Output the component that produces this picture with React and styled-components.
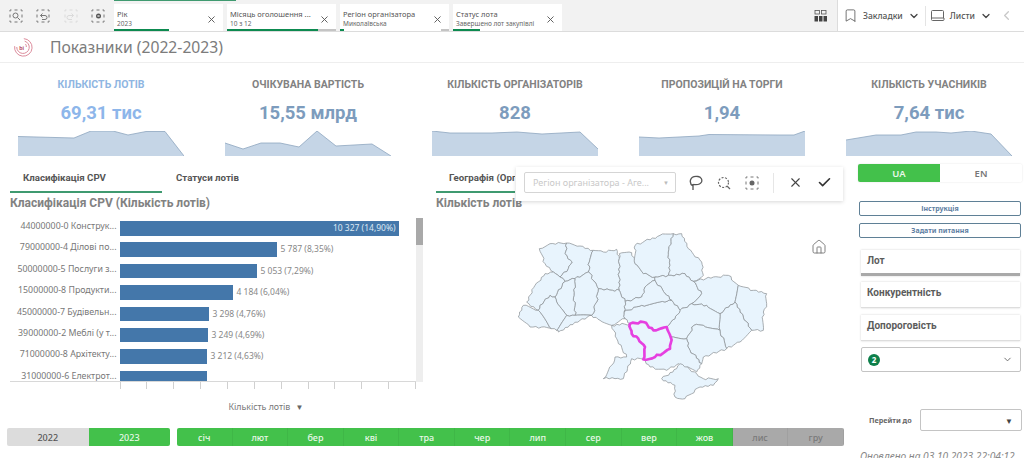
import React from 'react';
import styled, { createGlobalStyle } from 'styled-components';
import { X, ChevronDown, ChevronLeft, Bookmark, Check, House } from 'lucide-react';

const GlobalStyle = createGlobalStyle`
    html, body {
        margin: 0;
        padding: 0;
        background: #fff;
    }
    * {
        box-sizing: border-box;
    }
`;

const chips = [
    { title: 'Рік', value: '2023', green: 55, grey: 0 },
    { title: 'Місяць оголошення ...', value: '10 з 12', green: 91, grey: 18 },
    { title: 'Регіон організатора', value: 'Миколаївська', green: 4, grey: 8 },
    { title: 'Статус лота', value: 'Завершено лот закупівлі', green: 27, grey: 0 },
];

const kpis = [
    { label: 'КІЛЬКІСТЬ ЛОТІВ', value: '69,31 тис', active: true, points: [[0, 5.5], [56, 7], [73, 0], [95, 0], [110, 4], [128, 0.5], [147, 0.5], [166, 25]] },
    { label: 'ОЧІКУВАНА ВАРТІСТЬ', value: '15,55 млрд', points: [[0, 12], [18, 18], [36, 12], [55, 12], [74, 16], [92, 0], [111, 15], [147, 13], [166, 25]] },
    { label: 'КІЛЬКІСТЬ ОРГАНІЗАТОРІВ', value: '828', points: [[0, 0], [18, 2], [60, 2], [85, 1], [110, 3], [148, 1], [166, 18]] },
    { label: 'ПРОПОЗИЦІЙ НА ТОРГИ', value: '1,94', points: [[0, 6], [20, 7], [60, 5], [70, 3.5], [140, 4], [155, 4], [166, 0]] },
    { label: 'КІЛЬКІСТЬ УЧАСНИКІВ', value: '7,64 тис', points: [[0, 9], [30, 4], [55, 4], [70, 1], [90, 1], [105, 2], [125, 0], [145, 3], [166, 25]] },
];

const bars = [
    { label: '44000000-0 Конструк...', width: 279, value: '10 327 (14,90%)', inside: true },
    { label: '79000000-4 Ділові по...', width: 157, value: '5 787 (8,35%)' },
    { label: '50000000-5 Послуги з...', width: 137, value: '5 053 (7,29%)' },
    { label: '15000000-8 Продукти...', width: 113, value: '4 184 (6,04%)' },
    { label: '45000000-7 Будівельн...', width: 89, value: '3 298 (4,76%)' },
    { label: '39000000-2 Меблі (у т...', width: 88, value: '3 249 (4,69%)' },
    { label: '71000000-8 Архітекту...', width: 87, value: '3 212 (4,63%)' },
    { label: '31000000-6 Електрот...', width: 87 },
];

const months = ['січ', 'лют', 'бер', 'кві', 'тра', 'чер', 'лип', 'сер', 'вер', 'жов', 'лис', 'гру'];

const regions = [
    [[118, 80], [150, 65], [200, 63], [195, 95], [217, 120], [205, 140], [180, 165], [160, 150], [135, 125]],
    [[200, 63], [240, 72], [280, 85], [268, 120], [265, 150], [225, 170], [195, 178], [180, 165], [205, 140], [217, 120], [195, 95]],
    [[280, 85], [310, 90], [350, 82], [358, 110], [358, 205], [338, 205], [295, 200], [285, 180], [265, 150], [268, 120]],
    [[358, 110], [358, 95], [395, 92], [405, 125], [430, 155], [465, 165], [465, 175], [435, 195], [425, 225], [375, 238], [358, 205]],
    [[405, 70], [480, 40], [520, 35], [505, 90], [510, 130], [505, 160], [465, 165], [430, 155], [405, 125]],
    [[520, 35], [545, 35], [565, 80], [605, 120], [610, 160], [580, 178], [555, 155], [505, 160], [510, 130], [505, 90]],
    [[465, 165], [505, 160], [555, 155], [580, 178], [605, 215], [575, 245], [540, 265], [515, 235], [495, 215], [465, 175]],
    [[580, 178], [640, 165], [685, 160], [715, 190], [705, 240], [660, 275], [620, 250], [575, 245], [605, 215]],
    [[715, 190], [760, 205], [800, 215], [800, 245], [790, 270], [790, 325], [755, 325], [730, 285], [705, 240]],
    [[705, 240], [730, 285], [755, 325], [720, 360], [680, 380], [660, 325], [660, 275]],
    [[540, 265], [575, 245], [620, 250], [660, 275], [660, 325], [610, 310], [582, 310], [560, 350], [512, 345], [500, 315], [525, 290]],
    [[582, 310], [610, 310], [660, 325], [680, 380], [610, 405], [605, 425], [570, 385], [560, 350]],
    [[512, 345], [560, 350], [570, 385], [605, 425], [590, 450], [535, 425], [500, 445], [450, 435], [430, 412], [465, 405], [510, 380]],
    [[335, 310], [390, 305], [395, 335], [415, 350], [435, 375], [430, 412], [395, 410], [370, 470], [345, 470], [310, 470], [335, 430], [345, 405], [380, 405], [350, 350]],
    [[372, 270], [425, 250], [495, 240], [515, 235], [540, 265], [525, 290], [500, 315], [460, 325], [430, 300], [390, 305], [375, 290]],
    [[375, 238], [425, 225], [435, 195], [465, 175], [495, 215], [515, 235], [495, 240], [425, 250], [372, 270]],
    [[295, 200], [338, 205], [358, 205], [375, 238], [372, 270], [375, 290], [335, 310], [300, 295], [275, 280], [290, 240]],
    [[225, 170], [265, 150], [285, 180], [295, 200], [290, 240], [275, 280], [225, 280], [222, 220]],
    [[165, 225], [195, 178], [225, 170], [222, 220], [225, 280], [200, 280], [170, 240]],
    [[80, 240], [105, 190], [135, 155], [160, 150], [180, 165], [195, 178], [165, 225], [150, 220], [120, 250], [115, 265]],
    [[70, 250], [115, 265], [155, 320], [125, 315], [90, 315], [55, 285]],
    [[115, 265], [120, 250], [150, 220], [165, 225], [170, 240], [200, 280], [170, 325], [155, 320]],
    [[200, 280], [225, 280], [275, 280], [240, 295], [175, 330], [170, 325]],
    [[485, 470], [530, 440], [540, 425], [590, 455], [610, 470], [655, 470], [640, 490], [600, 495], [555, 530], [525, 525], [525, 490]],
];

const mykolaiv = [[390, 305], [430, 300], [460, 325], [500, 315], [512, 345], [510, 380], [465, 405], [430, 412], [435, 375], [415, 350], [395, 335]];

// borders wobble the same way from both sides, so neighbours stay glued
function jagged(points) {
    let d = '';
    points.forEach((p, i) => {
        const q = points[(i + 1) % points.length];
        const flip = p[0] > q[0] || (p[0] === q[0] && p[1] > q[1]);
        const [a, b] = flip ? [q, p] : [p, q];
        const len = Math.hypot(b[0] - a[0], b[1] - a[1]);
        const n = Math.max(2, Math.round(len / 8));
        const steps = [];
        for (let k = 1; k < n; k++) {
            const t = k / n;
            const seed = Math.sin(a[0] * 12.9 + b[1] * 78.2 + k * 37.7) * 43758;
            const off = (seed - Math.floor(seed) - 0.5) * 7;
            steps.push([
                a[0] + (b[0] - a[0]) * t - ((b[1] - a[1]) / len) * off,
                a[1] + (b[1] - a[1]) * t + ((b[0] - a[0]) / len) * off,
            ]);
        }
        if (flip) steps.reverse();
        d += `${i === 0 ? 'M' : 'L'}${p[0]} ${p[1]} `;
        steps.forEach(s => {
            d += `L${s[0].toFixed(1)} ${s[1].toFixed(1)} `;
        });
    });
    return `${d}Z`;
}

const Sparkline = ({ points }) => {
    const line = points.map(p => p.join(',')).join(' ');
    return (
        <Spark viewBox="0 0 166 25" preserveAspectRatio="none">
            <polygon points={`0,25 ${line} 166,25`} fill="#c5d5e6" />
            <polyline points={line} fill="none" stroke="#8ea6bf" strokeWidth="0.8" />
        </Spark>
    );
};

const DashedBox = ({ children, color = '#777' }) => (
    <svg width="14" height="14" viewBox="0 0 14 14" fill="none" stroke={color} strokeWidth="1">
        <rect x="1" y="1" width="12" height="12" strokeDasharray="3 3" strokeDashoffset="1.500" />
        {children}
    </svg>
);

const Logo = () => (
    <svg width="20" height="20" viewBox="0 0 24 24" fill="none" stroke="#dc8c9c">
        <path d="M13 2a10.500 10.500 0 1 1-11 9" strokeWidth="1.200" />
        <path d="M14 5a7.500 7.500 0 1 1-9.500 7" strokeWidth="1.200" />
        <path d="M15 8.500a5 5 0 0 1 1 3.500" strokeWidth="1.200" />
        <text x="7.500" y="15" fontSize="7" fontWeight="700" fontFamily="Roboto, sans-serif" fill="#b9566e" stroke="none">bi</text>
    </svg>
);

const App = () => (
    <Root>
        <GlobalStyle />
        <Toolbar>
            <TopEdge />
            <ToolIcons>
                <DashedBox><circle cx="6.500" cy="6.500" r="2.500" /><path d="M8.500 8.500l2.500 2.500" /></DashedBox>
                <DashedBox><path d="M4.500 6.500h4.500a2 2 0 0 1 0 4H6M4.500 6.500l2-2M4.500 6.500l2 2" /></DashedBox>
                <DashedBox color="#dadada"><path d="M9.500 6.500H5a2 2 0 0 0 0 4h3M9.500 6.500l-2-2M9.500 6.500l-2 2" /></DashedBox>
                <DashedBox><circle cx="7.500" cy="7" r="2.500" fill="#555" stroke="none" /><path d="M6.500 6l2 2M8.500 6l-2 2" stroke="#fff" strokeWidth="0.700" /></DashedBox>
            </ToolIcons>
            <Chips>
                {chips.map(chip => (
                    <Chip key={chip.title}>
                        <ChipText>
                            <ChipTitle>{chip.title}</ChipTitle>
                            <ChipValue>{chip.value}</ChipValue>
                        </ChipText>
                        <X size={11} color="#555" strokeWidth={2} />
                        <ChipProgress>
                            <ProgressGreen style={{ width: chip.green }} />
                            {chip.grey > 0 && <ProgressGrey style={{ width: chip.grey }} />}
                        </ChipProgress>
                    </Chip>
                ))}
            </Chips>
            <GridIcon viewBox="0 0 14 12">
                <rect x="1" y="0.500" width="4.500" height="3.500" fill="none" stroke="#555" strokeWidth="0.800" />
                <rect x="7.500" y="0.500" width="4.500" height="3.500" fill="none" stroke="#555" strokeWidth="0.800" />
                <rect x="0.500" y="6" width="3.500" height="5.500" fill="#444" />
                <rect x="5" y="6" width="3.500" height="5.500" fill="#444" />
                <rect x="9.500" y="6" width="3.500" height="5.500" fill="#444" />
            </GridIcon>
            <NavArea>
                <NavItem>
                    <Bookmark size={15} color="#555" strokeWidth={1.3} />
                    <NavLabel>Закладки</NavLabel>
                    <ChevronDown size={12} color="#444" strokeWidth={2.5} />
                </NavItem>
                <NavDivider />
                <NavItem>
                    <svg width="14" height="12" viewBox="0 0 14 12" fill="none" stroke="#666" strokeWidth="1">
                        <path d="M3 10.500H1.500a1 1 0 0 1-1-1v-8a1 1 0 0 1 1-1h10a1 1 0 0 1 1 1V8M.5 8h12.500v1.500a1 1 0 0 1-1 1H3" />
                    </svg>
                    <NavLabel>Листи</NavLabel>
                    <ChevronDown size={12} color="#444" strokeWidth={2.5} />
                </NavItem>
                <BackIcon><ChevronLeft size={15} color="#c8c8c8" strokeWidth={2} /></BackIcon>
            </NavArea>
        </Toolbar>
        <TitleBar>
            <Logo />
            <PageTitle>Показники (2022-2023)</PageTitle>
        </TitleBar>
        <KpiRow>
            {kpis.map(kpi => (
                <Kpi key={kpi.label}>
                    <KpiLabel $active={kpi.active}>{kpi.label}</KpiLabel>
                    <KpiValue $active={kpi.active}>{kpi.value}</KpiValue>
                    <Sparkline points={kpi.points} />
                </Kpi>
            ))}
        </KpiRow>
        <Body>
            <Content>
                <Panels>
                    <LeftPanel>
                        <Tabs>
                            <Tab $width={152} $selected>Класифікація CPV</Tab>
                            <Tab>Статуси лотів</Tab>
                        </Tabs>
                        <PanelTitle>Класифікація CPV (Кількість лотів)</PanelTitle>
                        <ChartWrap>
                            <Plot>
                                <BarList>
                                    {bars.map(bar => (
                                        <BarRow key={bar.label}>
                                            <BarLabel>{bar.label}</BarLabel>
                                            <Bar style={{ width: bar.width }}>
                                                {bar.inside && <BarInside>{bar.value}</BarInside>}
                                            </Bar>
                                            {!bar.inside && <BarValue>{bar.value}</BarValue>}
                                        </BarRow>
                                    ))}
                                </BarList>
                                <Ticks>
                                    {Array.from({ length: 12 }, (_, i) => <Tick key={i} />)}
                                </Ticks>
                            </Plot>
                            <ScrollTrack><ScrollThumb /></ScrollTrack>
                        </ChartWrap>
                        <AxisLabel>Кількість лотів <AxisArrow>▼</AxisArrow></AxisLabel>
                    </LeftPanel>
                    <MiddlePanel>
                        <Tabs>
                            <Tab $width={79} $selected>Географія (Орг</Tab>
                        </Tabs>
                        <PanelTitle>Кількість лотів</PanelTitle>
                        <MapSvg viewBox="0 0 1020 555">
                            {regions.map((r, i) => (
                                <path key={i} d={jagged(r)} fill="#e8f4fd" stroke="#8c9196" strokeWidth="2.200" strokeLinejoin="round" />
                            ))}
                            <path d={jagged(mykolaiv)} fill="#e8f4fd" stroke="#e63fe0" strokeWidth="8" strokeLinejoin="round" />
                        </MapSvg>
                        <HomeButton><House size={16} color="#777" strokeWidth={1.4} /></HomeButton>
                        <SelectionBar>
                            <SelectionField>
                                <SelectionText>Регіон організатора - Аге...</SelectionText>
                                <SelectionCaret>▼</SelectionCaret>
                            </SelectionField>
                            <SelectionTools>
                                <svg width="14" height="16" viewBox="0 0 14 16" fill="none" stroke="#555" strokeWidth="1.300">
                                    <path d="M4 11C1.500 9.500 1 7 1.500 5 2.500 2 6 1 9 1.500c3 .5 4.500 3 3.500 5.500C11.500 9 8 10 4.500 9.500M4 9v6" />
                                </svg>
                                <svg width="14" height="14" viewBox="0 0 14 14" fill="none" stroke="#666" strokeWidth="1.200" strokeDasharray="2 1.500">
                                    <circle cx="6.500" cy="6.500" r="5" />
                                    <path d="M10 10l3 3" strokeDasharray="none" />
                                </svg>
                                <DashedBox><circle cx="7" cy="7" r="2.500" fill="#666" stroke="none" /></DashedBox>
                                <SelectionDivider />
                                <X size={15} color="#444" strokeWidth={1.8} />
                                <Check size={15} color="#333" strokeWidth={2.6} />
                            </SelectionTools>
                        </SelectionBar>
                    </MiddlePanel>
                </Panels>
                <Footer>
                    <YearGroup>
                        <Segment $tone="light">2022</Segment>
                        <Segment $tone="green">2023</Segment>
                    </YearGroup>
                    <MonthGroup>
                        {months.map((m, i) => (
                            <Segment key={m} $tone={i < 10 ? 'green' : 'grey'} $line>{m}</Segment>
                        ))}
                    </MonthGroup>
                </Footer>
            </Content>
            <Side>
                <LangSwitch>
                    <Lang $on>UA</Lang>
                    <Lang>EN</Lang>
                </LangSwitch>
                <SideButton $top={19}>Інструкція</SideButton>
                <SideButton $top={7}>Задати питання</SideButton>
                <Accordion $top={12} $thick>Лот</Accordion>
                <Accordion $top={6}>Конкурентність</Accordion>
                <Accordion $top={7}>Допороговість</Accordion>
                <Dropdown>
                    <Badge>2</Badge>
                    <ChevronDown size={11} color="#666" strokeWidth={2} />
                </Dropdown>
                <GotoRow>
                    <GotoLabel>Перейти до</GotoLabel>
                    <GotoSelect><GotoCaret>▼</GotoCaret></GotoSelect>
                </GotoRow>
                <Updated>Оновлено на 03.10.2023 22:04:12</Updated>
            </Side>
        </Body>
    </Root>
);

const Root = styled.div`
    width: 1024px;
    height: 458px;
    overflow: hidden;
    background: #fff;
    font-family: "Noto Sans", Roboto, sans-serif;
    color: #666;
`;

const Toolbar = styled.div`
    position: relative;
    height: 32px;
    display: flex;
    align-items: center;
    background: #f2f2f2;
    border-bottom: 1px solid #dcdcdc;
`;

const TopEdge = styled.div`
    position: absolute;
    left: 114px;
    top: 0;
    width: 122px;
    height: 1px;
    background: #3f9a70;
`;

const ToolIcons = styled.div`
    width: 114px;
    padding-left: 9px;
    padding-right: 9px;
    display: flex;
    justify-content: space-between;
`;

const Chips = styled.div`
    display: flex;
    gap: 4px;
    align-self: flex-start;
    margin-top: 4px;
`;

const Chip = styled.div`
    position: relative;
    width: 109px;
    height: 27px;
    padding: 3px 6px 0 3px;
    background: #fff;
    display: flex;
    align-items: center;
    justify-content: space-between;
`;

const ChipText = styled.div`
    display: flex;
    flex-direction: column;
    gap: 1px;
    white-space: nowrap;
`;

const ChipTitle = styled.span`
    font-size: 7.500px;
    line-height: 9px;
    color: #555;
`;

const ChipValue = styled.span`
    font-size: 6.500px;
    line-height: 8px;
    color: #666;
`;

const ChipProgress = styled.div`
    position: absolute;
    left: 0;
    right: 0;
    bottom: 0;
    height: 2px;
    display: flex;
    justify-content: space-between;
`;

const ProgressGreen = styled.div`
    background: #0d8a50;
`;

const ProgressGrey = styled.div`
    background: #c4c4c4;
`;

const GridIcon = styled.svg`
    width: 14px;
    height: 12px;
    margin-left: auto;
    margin-right: 9px;
`;

const NavArea = styled.div`
    width: 187px;
    height: 100%;
    background: #fff;
    border-left: 1px solid #dcdcdc;
    display: flex;
    align-items: center;
    padding-left: 5px;
`;

const NavItem = styled.div`
    display: flex;
    align-items: center;
    gap: 5px;
`;

const NavLabel = styled.span`
    font-size: 8.500px;
    color: #555;
    font-weight: 500;
`;

const NavDivider = styled.div`
    width: 1px;
    height: 20px;
    background: #e4e4e4;
    margin: 0 5px;
`;

const BackIcon = styled.div`
    margin-left: 7px;
    display: flex;
`;

const TitleBar = styled.div`
    height: 31px;
    display: flex;
    align-items: center;
    padding-left: 13px;
    gap: 17px;
    border-bottom: 1px solid #eee;
`;

const PageTitle = styled.h1`
    margin: 0;
    font-size: 15.700px;
    font-weight: 400;
    color: #7c7c7c;
`;

const KpiRow = styled.div`
    height: 94px;
    display: grid;
    grid-template-columns: repeat(5, 207px);
    padding-left: 18px;
`;

const Kpi = styled.div`
    width: 166px;
    display: flex;
    flex-direction: column;
    align-items: center;
    padding-top: 15px;
`;

const KpiLabel = styled.div`
    font-family: Roboto, sans-serif;
    font-size: 10.500px;
    line-height: 14px;
    font-weight: 700;
    white-space: nowrap;
    color: ${props => (props.$active ? '#8fb6e2' : '#828282')};
`;

const KpiValue = styled.div`
    font-family: Roboto, sans-serif;
    font-size: 18.500px;
    line-height: 22px;
    margin-top: 10px;
    font-weight: 700;
    white-space: nowrap;
    color: ${props => (props.$active ? '#8db6ea' : '#7d9cbd')};
`;

const Spark = styled.svg`
    width: 166px;
    height: 25px;
    margin-top: auto;
    margin-bottom: 1px;
    display: block;
`;

const Body = styled.div`
    display: flex;
    height: 301px;
`;

const Content = styled.div`
    width: 850px;
    display: flex;
    flex-direction: column;
`;

const Panels = styled.div`
    flex: 1;
    min-height: 0;
    display: flex;
`;

const LeftPanel = styled.div`
    width: 436px;
    padding-left: 10px;
`;

const MiddlePanel = styled.div`
    position: relative;
    width: 414px;
`;

const Tabs = styled.div`
    height: 38px;
    display: flex;
`;

const Tab = styled.div`
    width: ${props => (props.$width ? `${props.$width}px` : 'auto')};
    height: 36px;
    margin-left: ${props => (props.$selected ? '0' : '1px')};
    padding: 14px 0 0 13px;
    font-family: Roboto, sans-serif;
    font-size: 9.700px;
    line-height: 14px;
    font-weight: 700;
    color: #555;
    white-space: nowrap;
    overflow: hidden;
    border-bottom: 2px solid ${props => (props.$selected ? '#3f9a70' : 'transparent')};
`;

const PanelTitle = styled.div`
    font-family: Roboto, sans-serif;
    font-size: 12px;
    line-height: 16px;
    font-weight: 700;
    color: #828282;
`;

const ChartWrap = styled.div`
    display: flex;
    margin-top: 7px;
    height: 171px;
`;

const Plot = styled.div`
    width: 406px;
`;

const BarList = styled.div`
    height: 164px;
    padding-top: 3px;
    overflow: hidden;
    border-bottom: 1px solid #d8d8d8;
`;

const BarRow = styled.div`
    height: 21.400px;
    display: flex;
    align-items: flex-start;
`;

const BarLabel = styled.div`
    width: 109.500px;
    flex: none;
    padding-right: 3px;
    text-align: right;
    font-size: 8.800px;
    line-height: 11px;
    white-space: nowrap;
    color: #777;
`;

const Bar = styled.div`
    height: 14.500px;
    flex: none;
    background: #4477aa;
    text-align: right;
`;

const BarInside = styled.span`
    padding-right: 3px;
    font-size: 8.500px;
    line-height: 14.500px;
    display: block;
    color: #dce8f3;
`;

const BarValue = styled.div`
    margin-left: 4px;
    font-size: 8.500px;
    line-height: 14.500px;
    white-space: nowrap;
    color: #888;
`;

const Ticks = styled.div`
    display: flex;
    justify-content: space-between;
    margin-left: 109.500px;
`;

const Tick = styled.div`
    width: 1px;
    height: 7px;
    background: #d0d0d0;
`;

const ScrollTrack = styled.div`
    width: 7px;
    height: 164px;
    background: #eeeeee;
`;

const ScrollThumb = styled.div`
    height: 27px;
    background: #a9a9a9;
`;

const AxisLabel = styled.div`
    margin-top: 12px;
    width: 406px;
    padding-left: 106px;
    text-align: center;
    font-size: 8.800px;
    line-height: 12px;
    color: #777;
`;

const AxisArrow = styled.span`
    margin-left: 3px;
    font-size: 8px;
    color: #666;
`;

const MapSvg = styled.svg`
    display: block;
    width: 340px;
    height: 185px;
    margin: 11px 0 0 64px;
`;

const HomeButton = styled.div`
    position: absolute;
    left: 375px;
    top: 82px;
    display: flex;
`;

const SelectionBar = styled.div`
    position: absolute;
    left: 80px;
    top: 10px;
    width: 327px;
    height: 34px;
    padding: 5px 0 0 8px;
    display: flex;
    align-items: flex-start;
    background: #fff;
    box-shadow: 0 1px 4px rgba(0, 0, 0, 0.16);
`;

const SelectionField = styled.div`
    width: 152px;
    height: 21px;
    padding: 0 6px 0 8px;
    border: 1px solid #d5d5d5;
    border-radius: 2px;
    display: flex;
    align-items: center;
    justify-content: space-between;
`;

const SelectionText = styled.span`
    font-size: 9px;
    color: #c9c9c9;
    white-space: nowrap;
`;

const SelectionCaret = styled.span`
    font-size: 6px;
    color: #bbb;
`;

const SelectionTools = styled.div`
    flex: 1;
    height: 21px;
    margin-left: 13px;
    margin-right: 11px;
    display: flex;
    align-items: center;
    justify-content: space-between;
`;

const SelectionDivider = styled.div`
    width: 1px;
    height: 20px;
    background: #e6e6e6;
`;

const Footer = styled.div`
    height: 18px;
    flex: none;
    padding: 0 6px 0 7px;
    display: flex;
    gap: 7px;
    margin-bottom: 12px;
`;

const YearGroup = styled.div`
    width: 163px;
    height: 18px;
    display: flex;
    border-radius: 2px;
    overflow: hidden;
`;

const MonthGroup = styled.div`
    flex: 1;
    height: 18px;
    display: flex;
    border-radius: 2px;
    overflow: hidden;
`;

const segmentBackgrounds = { light: '#dcdcdc', green: '#43c14b', grey: '#a9a9a9' };
const segmentColors = { light: '#555', green: '#e8f8e8', grey: '#7a7a7a' };

const Segment = styled.div`
    flex: 1;
    display: flex;
    align-items: center;
    justify-content: center;
    font-size: 9px;
    font-weight: 500;
    background: ${props => segmentBackgrounds[props.$tone]};
    color: ${props => segmentColors[props.$tone]};
    border-right: ${props => (props.$line ? '1px solid rgba(0, 0, 0, 0.05)' : 'none')};
`;

const Side = styled.div`
    width: 174px;
    padding: 7px 2px 0 8px;
`;

const LangSwitch = styled.div`
    display: flex;
    height: 18px;
    border-radius: 2px;
    box-shadow: 0 0 2px rgba(0, 0, 0, 0.12);
    overflow: hidden;
`;

const Lang = styled.div`
    flex: 1;
    display: flex;
    align-items: center;
    justify-content: center;
    font-size: 9.500px;
    font-weight: 600;
    background: ${props => (props.$on ? '#43c14b' : '#fff')};
    color: ${props => (props.$on ? '#e8f8e8' : '#777')};
`;

const SideButton = styled.div`
    height: 15px;
    margin: ${props => props.$top}px 1px 0 1px;
    border: 1px solid #5f8096;
    border-radius: 2px;
    display: flex;
    align-items: center;
    justify-content: center;
    font-size: 7px;
    font-weight: 700;
    color: #5f7fa3;
`;

const Accordion = styled.div`
    height: 26px;
    margin: ${props => props.$top}px 2px 0 3px;
    padding: 4px 0 0 6px;
    font-family: Roboto, sans-serif;
    font-size: 10px;
    line-height: 14px;
    font-weight: 700;
    color: #5c5c5c;
    box-shadow: 0 0 2px rgba(0, 0, 0, 0.18);
    border-bottom: ${props => (props.$thick ? '3px solid #a9a9a9' : '1px solid #ddd')};
`;

const Dropdown = styled.div`
    height: 25px;
    margin: 6px 1px 0 3px;
    padding: 0 7px 0 6px;
    border: 1px solid #c4c4c4;
    border-radius: 2px;
    display: flex;
    align-items: center;
    justify-content: space-between;
`;

const Badge = styled.div`
    width: 12px;
    height: 12px;
    border-radius: 50%;
    background: #0d7f4a;
    color: #fff;
    font-size: 8px;
    font-weight: 700;
    display: flex;
    align-items: center;
    justify-content: center;
`;

const GotoRow = styled.div`
    display: flex;
    align-items: center;
    margin-top: 37px;
    padding-left: 11px;
`;

const GotoLabel = styled.div`
    width: 51px;
    font-size: 7.200px;
    font-weight: 700;
    color: #666;
    white-space: nowrap;
`;

const GotoSelect = styled.div`
    flex: 1;
    height: 22px;
    padding-right: 8px;
    border: 1px solid #c4c4c4;
    border-radius: 2px;
    display: flex;
    align-items: center;
    justify-content: flex-end;
`;

const GotoCaret = styled.span`
    font-size: 8px;
    color: #444;
`;

const Updated = styled.div`
    margin-top: 18px;
    margin-left: 2px;
    font-size: 10.200px;
    font-style: italic;
    line-height: 14px;
    color: #888;
    white-space: nowrap;
`;

export default App;
